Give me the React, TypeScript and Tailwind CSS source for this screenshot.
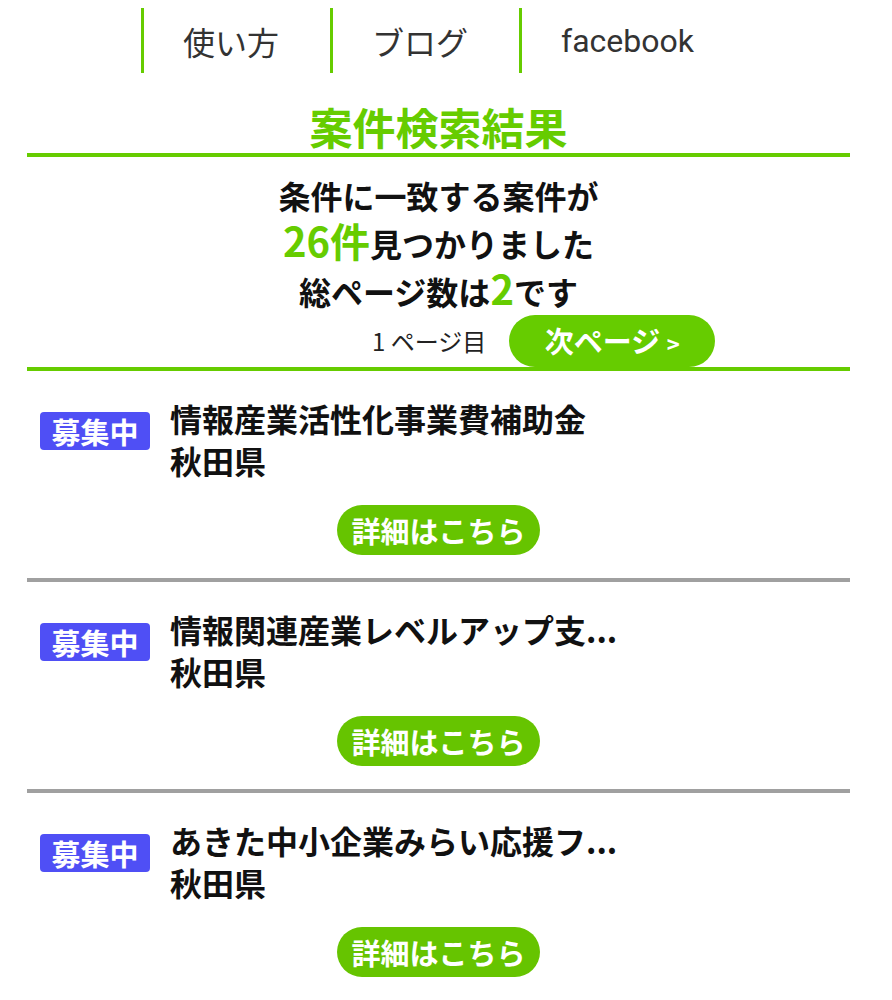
const green = 'text-[#66cc00]'

const jp = { fontFamily: '"Noto Sans CJK JP", Roboto, sans-serif' }

type Item = { title: string; area: string }

const items: Item[] = [
  { title: '情報産業活性化事業費補助金', area: '秋田県' },
  { title: '情報関連産業レベルアップ支...', area: '秋田県' },
  { title: 'あきた中小企業みらい応援フ...', area: '秋田県' },
]

function NavLink({ label, latin }: { label: string; latin?: boolean }) {
  return (
    <div
      className={`w-[189px] h-[65px] border-l-[3px] border-[#66cc00] pl-[39px] flex items-center text-[32px] text-[#333] ${latin ? 'font-[Roboto]' : ''}`}
    >
      {label}
    </div>
  )
}

function ResultRow({ item }: { item: Item }) {
  return (
    <div className="border-b-4 border-[#a0a0a0]">
      <div className="flex items-start pt-[26px] pl-[13px]">
        <div className="mt-[15px] w-[110px] h-[38px] rounded-[4px] bg-[#4f4ff5] text-white text-[29px] font-bold leading-[38px] text-center">
          募集中
        </div>
        <div className="ml-[20px] text-[32px] font-bold leading-[42px] text-[#111]">
          <div>{item.title}</div>
          <div>{item.area}</div>
        </div>
      </div>
      <div className="flex justify-center mt-[24px] mb-[23px]">
        <button className="w-[203px] h-[50px] rounded-full bg-[#66c400] text-white text-[29px] font-bold leading-[50px]">
          詳細はこちら
        </button>
      </div>
    </div>
  )
}

export default function App() {
  return (
    <div className="min-h-screen bg-white" style={jp}>
      {/* top nav */}
      <nav className="flex pt-2 pl-[141px]">
        <NavLink label="使い方" />
        <NavLink label="ブログ" />
        <NavLink label="facebook" latin />
      </nav>

      <div className="ml-[27px] w-[823px]">
        <h1 className={`mt-[28px] mb-[2px] text-center text-[43px] font-bold leading-[50px] ${green}`}>案件検索結果</h1>
        <div className="h-[4px] bg-[#66cc00]" />

        <div className="pt-[14px] text-center text-[32px] font-bold text-[#111]">
          <p className="h-[48px] leading-[48px]">条件に一致する案件が</p>
          <p className="h-[48px] leading-[48px]">
            <span className={`text-[40px] leading-none ${green}`}>26件</span>見つかりました
          </p>
          <p className="h-[48px] leading-[48px]">
            総ページ数は<span className={`text-[40px] leading-none ${green}`}>2</span>です
          </p>
        </div>

        <div className="flex items-center h-[52px] pl-[345px]">
          <span className="text-[24px] text-[#222]">1 ページ目</span>
          <button className="ml-[23px] w-[206px] h-[52px] rounded-full bg-[#66cc00] text-white text-[29px] font-bold">
            次ページ <span className="text-[22px]">&gt;</span>
          </button>
        </div>
        <div className="h-[4px] bg-[#66cc00]" />

        {items.map((it, i) => (
          <ResultRow key={i} item={it} />
        ))}
      </div>
    </div>
  )
}
